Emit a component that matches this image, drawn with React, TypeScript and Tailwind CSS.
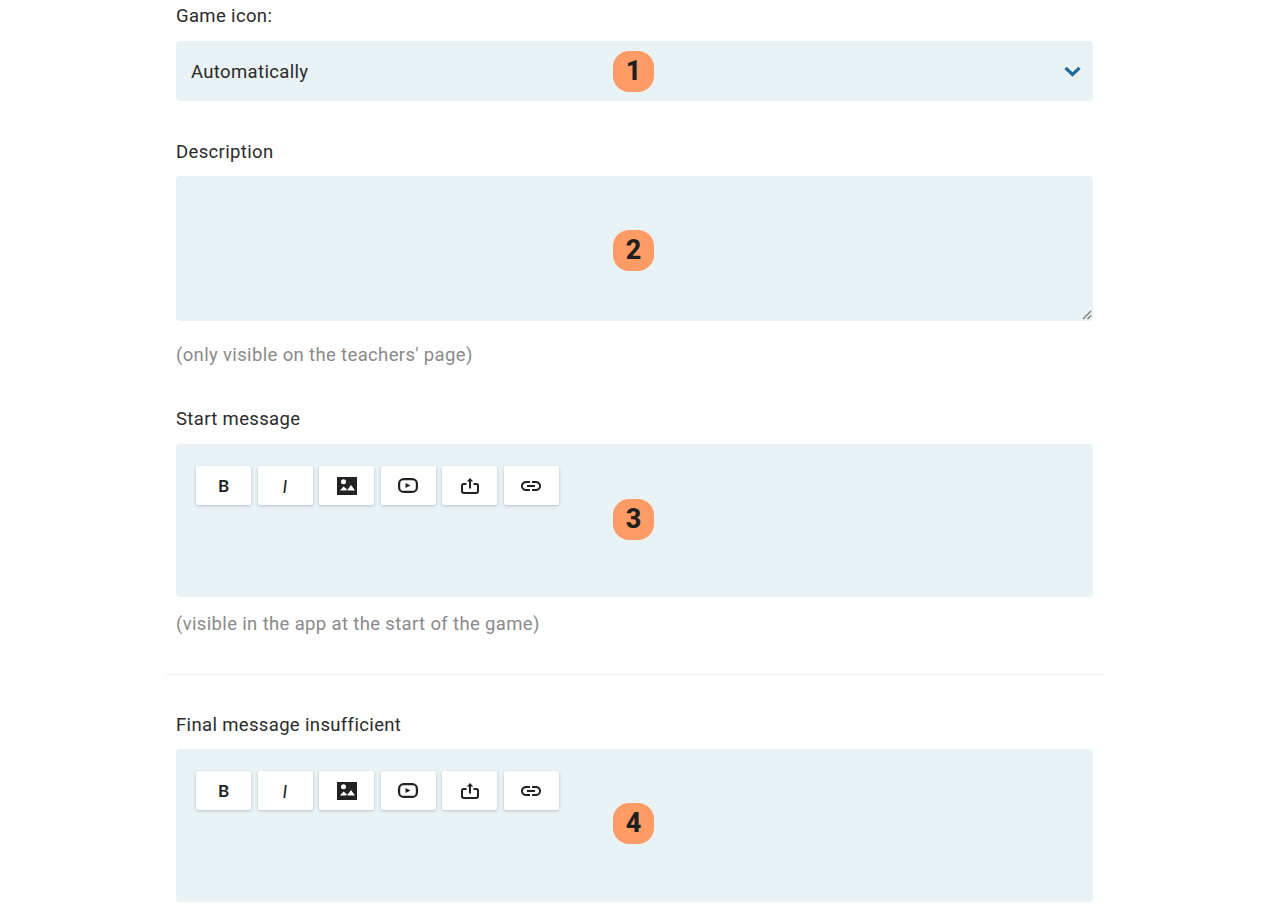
import { ReactNode } from 'react';
import { MdLink } from 'react-icons/md';

// fields share one badge, only its vertical place differs
const Badge = ({ n, className }: { n: number; className: string }) => (
    <div className={`absolute left-[437px] w-[41px] h-[41px] rounded-[16px] bg-[#ff9c66] flex items-center justify-center text-[27px] font-extrabold tracking-normal text-[#1f1f1f] ${className}`}>
        {n}
    </div>
);

const ToolButton = ({ children }: { children: ReactNode }) => (
    <button className="w-[55px] h-[39px] bg-white rounded-[2px] shadow-[0_1px_3px_rgba(60,80,90,0.3)] flex items-center justify-center text-[#222]">
        {children}
    </button>
);

const Toolbar = () => (
    <div className="flex gap-[6.5px]">
        <ToolButton><span className="font-['Lato',sans-serif] text-[17px] font-bold leading-none tracking-normal">B</span></ToolButton>
        <ToolButton><span className="font-['Lato',sans-serif] text-[18px] italic font-normal leading-none tracking-normal">I</span></ToolButton>
        <ToolButton>
            <svg width="20" height="18" viewBox="0 0 20 18">
                <path fill="#222" fillRule="evenodd" d="M0 0h20v18H0zM6.500 2.200a2.500 2.500 0 1 0 0 5 2.500 2.500 0 0 0 0-5zM3 13.500h6l1-1.100.8 1.100H18L14 8l-3.500 4.700L6.500 9.500z" />
            </svg>
        </ToolButton>
        <ToolButton>
            <svg width="20" height="15" viewBox="0 0 20 15">
                <rect x="1.100" y="1.100" width="17.800" height="12.800" rx="4.500" fill="none" stroke="#222" strokeWidth="2.200" />
                <path fill="#222" d="M7.500 5v5l5-2.500z" />
            </svg>
        </ToolButton>
        <ToolButton>
            <svg width="18" height="16" viewBox="0 0 18 16" fill="none" stroke="#222" strokeWidth="2">
                <path d="M5.500 6H2.500C1.600 6 1 6.600 1 7.500v5.500C1 14 1.900 15 3 15h12c1.100 0 2-1 2-2V7.500C17 6.600 16.400 6 15.500 6H12.500" />
                <path d="M9 10.500V1.500" />
                <path fill="#222" stroke="none" d="M9 0 5.800 3.600h6.400z" />
            </svg>
        </ToolButton>
        <ToolButton><MdLink size={24} /></ToolButton>
    </div>
);

const EditorField = ({ n, badgeTop }: { n: number; badgeTop: string }) => (
    <div className="relative h-[153px] bg-[#e9f2f5] rounded-[4px] pt-[22px] pl-[20px]">
        <Toolbar />
        <Badge n={n} className={badgeTop} />
    </div>
);

export default function App() {
    return (
        <div className="h-[913px] overflow-hidden bg-white font-['Roboto',sans-serif] text-[18.5px] tracking-[0.35px] text-[#2b2b2b]">
            <div className="w-[917px] ml-[176px] pt-[4px]">
                <label className="block leading-[24px]">Game icon:</label>
                <div className="relative mt-[13px] h-[60px] bg-[#e9f2f5] rounded-[4px] flex items-center justify-between pl-[15px] pr-[12px]">
                    <span className="mt-[3px]">Automatically</span>
                    <svg width="17" height="11" viewBox="0 0 17 11" fill="none" stroke="#1f6b99" strokeWidth="3.200">
                        <path d="M1.500 1.800 8.500 8.500l7-6.700" />
                    </svg>
                    <Badge n={1} className="top-[10px]" />
                </div>

                <label className="block leading-[24px] mt-[39px]">Description</label>
                <div className="relative mt-[12px] h-[145px] bg-[#e9f2f5] rounded-[4px]">
                    <Badge n={2} className="top-[53.500px]" />
                    <svg className="absolute right-[1px] bottom-[1px]" width="10" height="10" viewBox="0 0 10 10" stroke="#777" strokeWidth="1.200">
                        <path d="M1 9 9 1M5.500 9 9 5.500" />
                    </svg>
                </div>
                <p className="mt-[22px] leading-[24px] text-[#8a8a8a]">(only visible on the teachers' page)</p>

                <label className="block leading-[24px] mt-[40px]">Start message</label>
                <div className="mt-[13px]"><EditorField n={3} badgeTop="top-[55px]" /></div>
                <p className="mt-[15px] leading-[24px] text-[#8a8a8a]">(visible in the app at the start of the game)</p>

                <div className="h-px bg-[#eef0f1] -mx-[10px] mt-[38px]" />

                <label className="block leading-[24px] mt-[38px]">Final message insufficient</label>
                <div className="mt-[12px]"><EditorField n={4} badgeTop="top-[54px]" /></div>
            </div>
        </div>
    );
}
